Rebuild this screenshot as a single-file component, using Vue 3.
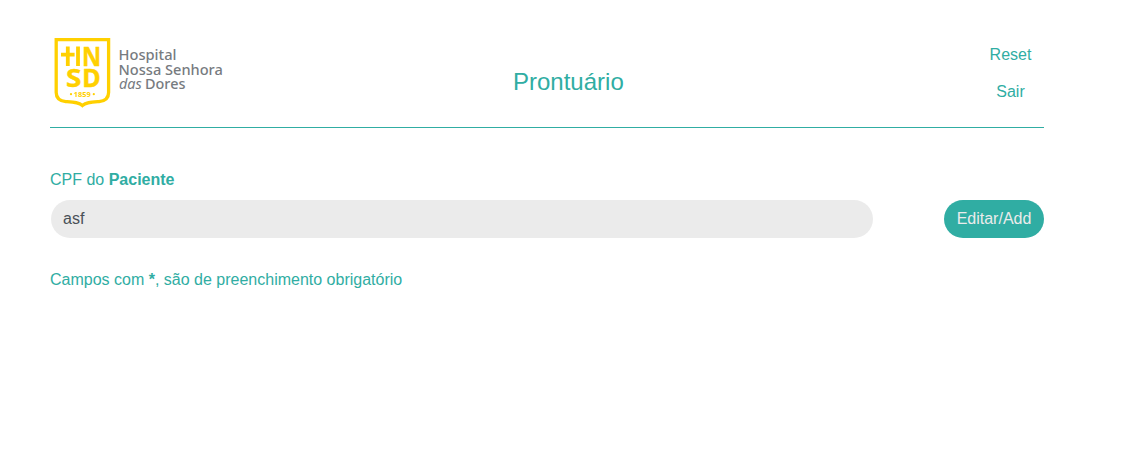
<script setup>
import { ref } from 'vue'

const cpf = ref('asf')
</script>

<template>
  <main class="page">
    <header class="header">
      <svg class="logo" width="180" height="76" viewBox="50 34 180 76" role="img" aria-label="Hospital Nossa Senhora das Dores">
        <path class="shield" d="M56.2 39.6H108.6V92.5C108.6 98.5 105 101 99 101.6C91 102.2 86 102.4 82.4 105.6C78.8 102.4 73.8 102.2 65.8 101.6C59.8 101 56.2 98.5 56.2 92.5Z" />
        <path class="cross" d="M67.8 46.5V66M61 54.6H74.6M78 46.5V66" />
        <g class="initials">
          <text class="stroked" x="82" y="65.6" font-size="26.5" textLength="19.2" lengthAdjust="spacingAndGlyphs">N</text>
          <text class="stroked" x="66" y="86.5" font-size="25.5" textLength="15.4" lengthAdjust="spacingAndGlyphs">S</text>
          <text class="stroked" x="82.2" y="86.5" font-size="25.5" textLength="18.4" lengthAdjust="spacingAndGlyphs">D</text>
          <text x="73.8" y="96.9" font-size="7.2" textLength="17" lengthAdjust="spacingAndGlyphs">1859</text>
        </g>
        <g class="dots">
          <circle cx="71" cy="94.2" r="1.1" />
          <circle cx="93.8" cy="94.2" r="1.1" />
        </g>
        <g class="name">
          <text x="118.5" y="60" textLength="58" lengthAdjust="spacingAndGlyphs">Hospital</text>
          <text x="118.5" y="74.8" textLength="104.3" lengthAdjust="spacingAndGlyphs">Nossa Senhora</text>
          <text x="119" y="89.2" textLength="22.8" lengthAdjust="spacingAndGlyphs" class="italic">das</text>
          <text x="145" y="89.2" textLength="40.4" lengthAdjust="spacingAndGlyphs">Dores</text>
        </g>
      </svg>
      <h1 class="title">Prontuário</h1>
      <nav class="actions">
        <a class="action">Reset</a>
        <a class="action">Sair</a>
      </nav>
    </header>

    <label class="label" for="cpf">CPF do <b>Paciente</b></label>
    <div class="row">
      <input id="cpf" v-model="cpf" class="field" type="text" />
      <button class="button" type="button">Editar/Add</button>
    </div>
    <p class="note">Campos com <b>*</b>, são de preenchimento obrigatório</p>
  </main>
</template>

<style>
body {
  margin: 0;
  background: #fff;
}
</style>

<style scoped>
.page {
  box-sizing: border-box;
  width: 1044px;
  padding: 34px 0 0 50px;
  font: 16px/24px "Liberation Sans", Arial, sans-serif;
  color: #30ada3;
}
.header {
  display: grid;
  grid-template-columns: 463px 1fr 67px;
  height: 93px;
  border-bottom: 1px solid #30ada3;
}
.logo {
  display: block;
}
.shield {
  fill: none;
  stroke: #ffd000;
  stroke-width: 3.3;
}
.cross {
  fill: none;
  stroke: #ffd000;
  stroke-width: 3.8;
}
.initials {
  fill: #ffd000;
  font-family: "Noto Sans", sans-serif;
  font-weight: 700;
}
.stroked {
  stroke: #ffd000;
  stroke-width: 0.4;
}
.dots {
  fill: #ffd000;
}
.name {
  fill: #777b7f;
  font-family: "Noto Sans", sans-serif;
  font-size: 15px;
  font-weight: 500;
}
.italic {
  font-style: italic;
  font-weight: 400;
}
.title {
  margin: 33px 0 0;
  font-size: 24px;
  line-height: 29px;
  font-weight: 400;
}
.actions {
  display: flex;
  flex-direction: column;
  align-items: center;
  gap: 13px;
  padding-top: 9px;
}
.label {
  display: block;
  margin-top: 40px;
}
.row {
  display: flex;
  justify-content: space-between;
  margin-top: 8px;
  padding-left: 1px;
}
.field {
  box-sizing: border-box;
  width: 822px;
  height: 38px;
  padding: 0 12px;
  border: 0;
  border-radius: 19px;
  outline: 0;
  background: #ebebeb;
  color: #495057;
  font: inherit;
}
.button {
  width: 100px;
  height: 38px;
  padding: 0;
  border: 0;
  border-radius: 19px;
  background: #30ada3;
  color: #ebebeb;
  font: inherit;
}
.note {
  margin: 30px 0 0;
}
</style>
